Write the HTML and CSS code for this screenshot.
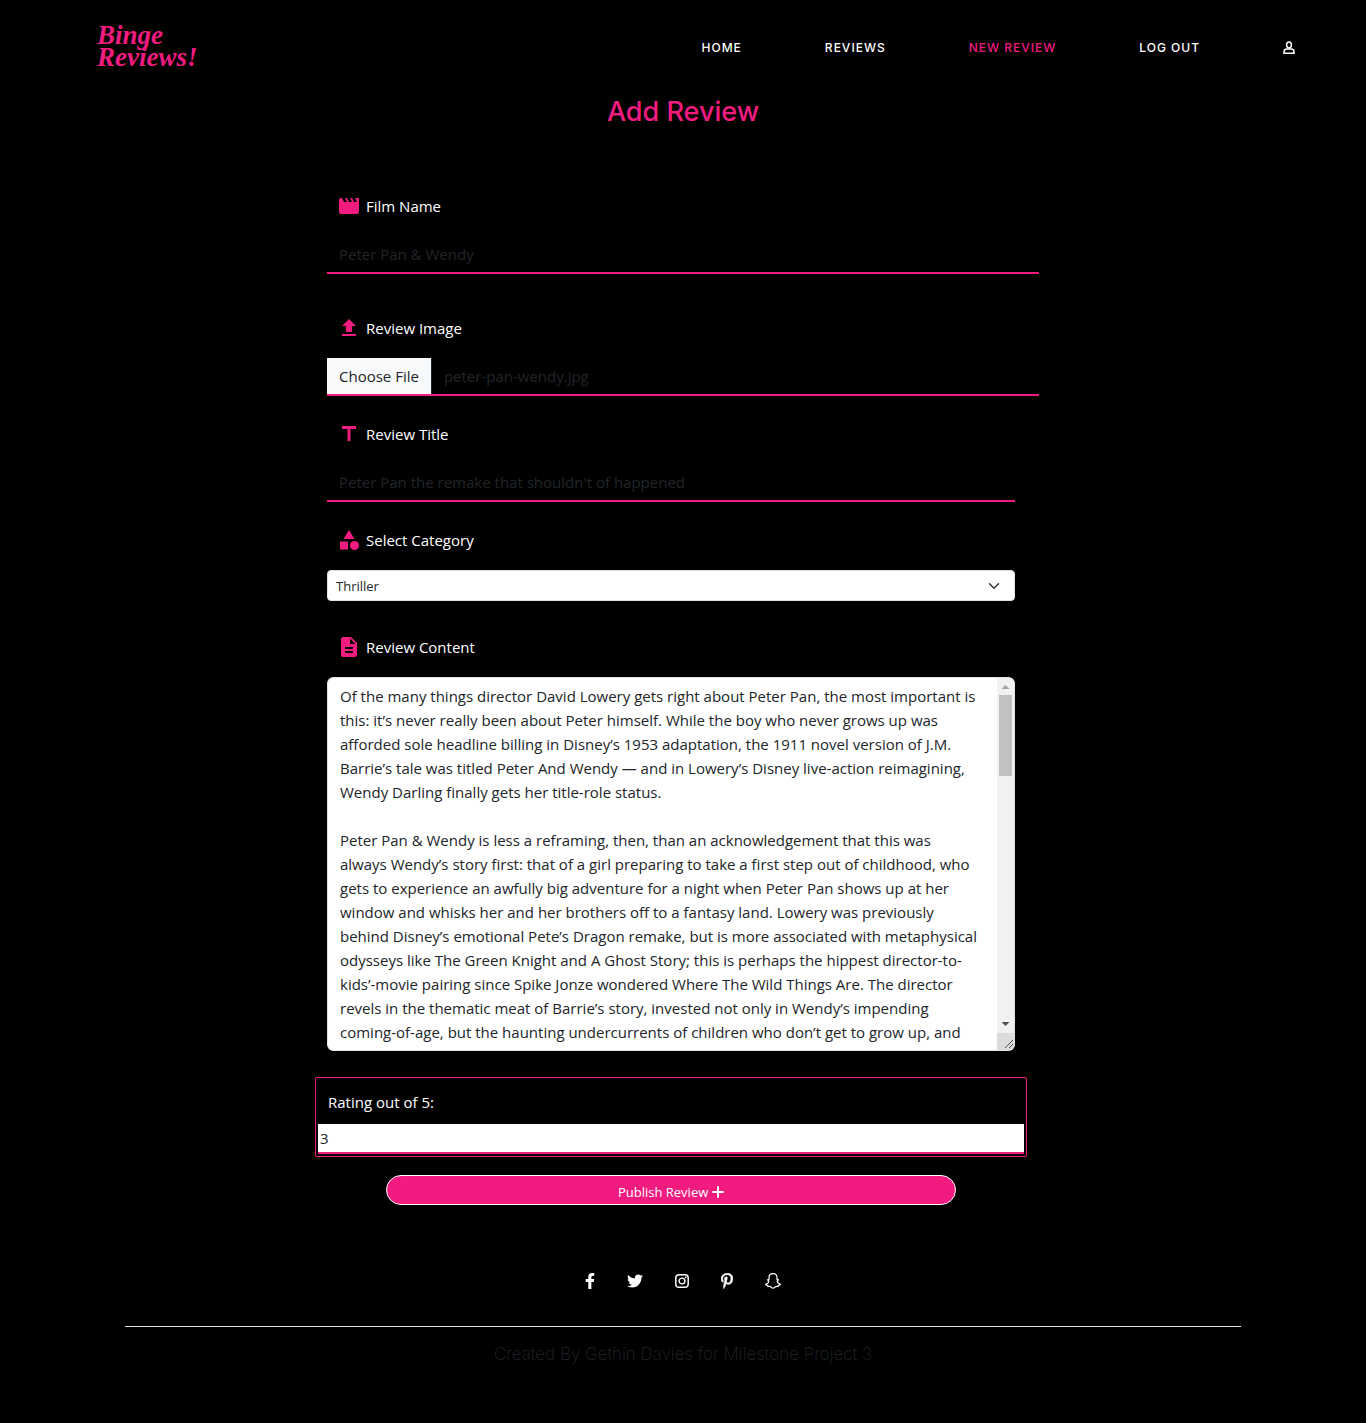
FILE: index.html
```html
<!DOCTYPE html>
<html lang="en">
<head>
<meta charset="utf-8">
<meta name="viewport" content="width=device-width, initial-scale=1">
<title>Binge Reviews! - Add Review</title>
<link rel="stylesheet" href="styles.css">
</head>
<body>
<header class="site-header">
  <a class="logo" href="#"><span>Binge</span><span>Reviews!</span></a>
  <nav class="nav" aria-label="Main">
    <a href="#">HOME</a>
    <a href="#">REVIEWS</a>
    <a class="active" href="#">NEW REVIEW</a>
    <a href="#">LOG OUT</a>
    <a class="profile" href="#" aria-label="Profile">
      <svg viewBox="0 0 12 14" width="12" height="14" fill="none" stroke="currentColor" stroke-width="1.5"><ellipse cx="6" cy="4" rx="2.4" ry="2.9"/><path d="M1 12.2V11c0-1.800 1.200-3 3-3h4c1.800 0 3 1.200 3 3v1.200z"/></svg>
    </a>
  </nav>
</header>
<main>
  <h1 class="title">Add Review</h1>
  <form class="form">
    <div class="field field-wide">
      <label for="film"><svg viewBox="0 0 24 24"><path d="m18 4 2 4h-3l-2-4h-2l2 4h-3l-2-4H8l2 4H7L5 4H4c-1.100 0-1.990.9-1.990 2L2 18c0 1.100.9 2 2 2h16c1.100 0 2-.9 2-2V4h-4z"/></svg>Film Name</label>
      <input class="line-input" id="film" type="text" value="Peter Pan &amp; Wendy">
    </div>
    <div class="field field-image">
      <label for="image"><svg viewBox="0 0 24 24"><path d="M9 16h6v-6h4l-7-7-7 7h4zm-4 2h14v2H5z"/></svg>Review Image</label>
      <input class="line-input file-input" id="image" type="file">
    </div>
    <div class="field">
      <label for="title"><svg viewBox="0 0 24 24"><path d="M5 4v3h5.500v12h3V7H19V4z"/></svg>Review Title</label>
      <input class="line-input" id="title" type="text" value="Peter Pan the remake that shouldn't of happened">
    </div>
    <div class="field">
      <label for="category"><svg viewBox="0 0 24 24"><path d="m12 2-5.500 9h11z"/><circle cx="17.500" cy="17.500" r="4.500"/><path d="M3 13.500h8v8H3z"/></svg>Select Category</label>
      <select class="select" id="category"><option>Thriller</option><option>Comedy</option><option>Horror</option><option>Family</option></select>
    </div>
    <div class="field field-content">
      <label for="content"><svg viewBox="0 0 24 24"><path d="M14 2H6c-1.100 0-1.990.9-1.990 2L4 20c0 1.100.89 2 1.990 2H18c1.100 0 2-.9 2-2V8l-6-6zm2 16H8v-2h8v2zm0-4H8v-2h8v2zm-3-5V3.500L18.500 9H13z"/></svg>Review Content</label>
      <div class="editor">
        <textarea class="textarea" id="content">Of the many things director David Lowery gets right about Peter Pan, the most important is this: it’s never really been about Peter himself. While the boy who never grows up was afforded sole headline billing in Disney’s 1953 adaptation, the 1911 novel version of J.M. Barrie’s tale was titled Peter And Wendy — and in Lowery’s Disney live-action reimagining, Wendy Darling finally gets her title-role status.

Peter Pan &amp; Wendy is less a reframing, then, than an acknowledgement that this was always Wendy’s story first: that of a girl preparing to take a first step out of childhood, who gets to experience an awfully big adventure for a night when Peter Pan shows up at her window and whisks her and her brothers off to a fantasy land. Lowery was previously behind Disney’s emotional Pete’s Dragon remake, but is more associated with metaphysical odysseys like The Green Knight and A Ghost Story; this is perhaps the hippest director-to-kids’-movie pairing since Spike Jonze wondered Where The Wild Things Are. The director revels in the thematic meat of Barrie’s story, invested not only in Wendy’s impending coming-of-age, but the haunting undercurrents of children who don’t get to grow up, and</textarea>
        <div class="scrollbar" aria-hidden="true">
          <span class="arrow arrow-up"></span>
          <span class="thumb"></span>
          <span class="arrow arrow-down"></span>
          <svg class="grip" viewBox="0 0 17 17" width="17" height="17"><path d="m8 15 8-8m-4 8 4-4" stroke="#505050"/></svg>
        </div>
      </div>
    </div>
    <div class="rating">
      <label for="rating">Rating out of 5:</label>
      <input id="rating" type="text" inputmode="numeric" value="3">
    </div>
    <button class="publish" type="submit">Publish Review <svg viewBox="0 0 12 12" width="12" height="12"><path d="M6 1v10M1 6h10" stroke="currentColor" stroke-width="2" stroke-linecap="round"/></svg></button>
  </form>
</main>
<footer class="footer">
  <div class="social">
    <a href="#" aria-label="Facebook"><svg width="10" height="16" viewBox="0 0 320 512"><path d="M279.140 288l14.220-92.660h-88.910v-60.130c0-25.350 12.420-50.060 52.240-50.060h40.420V6.260S260.430 0 225.360 0c-73.220 0-121.080 44.380-121.080 124.720v70.620H22.890V288h81.390v224h100.170V288z"/></svg></a>
    <a href="#" aria-label="Twitter"><svg width="16" height="16" viewBox="0 0 512 512"><path d="M459.370 151.716c.325 4.548.325 9.097.325 13.645 0 138.720-105.583 298.558-298.558 298.558-59.452 0-114.680-17.219-161.137-47.106 8.447.974 16.568 1.299 25.340 1.299 49.055 0 94.213-16.568 130.274-44.832-46.132-.975-84.792-31.188-98.112-72.772 6.498.974 12.995 1.624 19.818 1.624 9.421 0 18.843-1.300 27.614-3.573-48.081-9.747-84.143-51.980-84.143-102.985v-1.299c13.969 7.797 30.214 12.670 47.431 13.319-28.264-18.843-46.781-51.005-46.781-87.391 0-19.492 5.197-37.360 14.294-52.954 51.655 63.675 129.300 105.258 216.365 109.807-1.624-7.797-2.599-15.918-2.599-24.040 0-57.828 46.782-104.934 104.934-104.934 30.213 0 57.502 12.670 76.670 33.137 23.715-4.548 46.456-13.320 66.599-25.340-7.798 24.366-24.366 44.833-46.132 57.827 21.117-2.273 41.584-8.122 60.426-16.243-14.292 20.791-32.161 39.308-52.628 54.253z"/></svg></a>
    <a href="#" aria-label="Instagram"><svg width="14" height="14" viewBox="0 0 14 14"><rect x=".8" y=".8" width="12.400" height="12.400" rx="3.300" fill="none" stroke="currentColor" stroke-width="1.500"/><circle cx="7" cy="7" r="2.900" fill="none" stroke="currentColor" stroke-width="1.400"/><circle cx="10.700" cy="3.300" r=".9"/></svg></a>
    <a href="#" aria-label="Pinterest"><svg width="12" height="16" viewBox="0 0 384 512"><path stroke="currentColor" stroke-width="14" d="M204 6.500C101.400 6.500 0 74.900 0 185.600 0 256 39.600 296 63.600 296c9.900 0 15.600-27.600 15.600-35.400 0-9.300-23.700-29.100-23.700-67.800 0-80.400 61.200-137.400 140.400-137.400 68.100 0 118.500 38.700 118.500 109.800 0 53.100-21.300 152.700-90.300 152.700-24.900 0-46.200-18-46.200-43.800 0-37.800 26.400-74.400 26.400-113.400 0-66.200-93.900-54.200-93.900 25.800 0 16.800 2.100 35.400 9.600 50.700-13.800 59.400-42 147.900-42 209.100 0 18.900 2.700 37.500 4.500 56.400 3.400 3.800 1.700 3.400 6.900 1.500 50.400-69 48.600-82.500 71.400-172.800 12.300 23.400 44.100 36 69.300 36 106.200 0 153.900-103.500 153.900-196.800C384 71.300 298.200 6.500 204 6.500z"/></svg></a>
    <a href="#" aria-label="Snapchat"><svg width="16" height="16" viewBox="0 0 16 16"><path d="M8 .7C5.600.7 4 2.500 4 4.700v1.800c-.3.200-.8.200-1.200.1-.2.700.4 1.200 1 1.500C3.600 9.700 2.200 10.900.6 11.300c.2.800 1.100 1 2.100 1.200l.3 1c1.900-.4 2.600.1 3.300.8.500.5 1 .9 1.700.9s1.200-.4 1.700-.9c.7-.7 1.400-1.200 3.300-.8l.3-1c1-.2 1.900-.4 2.100-1.200-1.600-.4-3-1.600-3.200-3.200.6-.3 1.200-.8 1-1.500-.4.1-.9.100-1.200-.1V4.700C12 2.500 10.400.7 8 .7z" fill="none" stroke="currentColor" stroke-width="1.200"/></svg></a>
  </div>
  <p class="credit">Created By Gethin Davies for Milestone Project 3</p>
</footer>
<script src="script.js"></script>
</body>
</html>
```
FILE: styles.css
```css
:root {
  --pink: #f21c80;
  --ink: #212529;
  --body-font: "Open Sans", "Noto Sans", sans-serif;
}

*,
*::before,
*::after {
  box-sizing: border-box;
}

body {
  margin: 0;
  background: #000;
  color: var(--ink);
  font-family: var(--body-font);
  font-size: 15px;
  line-height: 24px;
}

a {
  color: #fff;
  text-decoration: none;
}

.site-header {
  display: flex;
  align-items: center;
  justify-content: space-between;
  padding: 24px 71px 28px 97px;
}

.logo {
  display: flex;
  flex-direction: column;
  color: var(--pink);
  font: italic bold 27px/22px "Liberation Serif", serif;
}

.nav {
  display: flex;
  align-items: center;
  gap: 83px;
  padding-top: 4px;
  font: 500 12px/20px Inter, sans-serif;
  letter-spacing: 1px;
}

.nav .active {
  color: var(--pink);
}

.profile svg {
  display: block;
}

.title {
  margin: 0;
  color: var(--pink);
  text-align: center;
  font: 500 27px/32px Inter, sans-serif;
}

.form {
  max-width: 712px;
  margin: 66px auto 0;
}

.field {
  display: flex;
  flex-direction: column;
  gap: 18px;
  margin: 0 24px 26px 0;
}

.field-wide {
  margin: 0 0 42px;
}

.field-image {
  margin-right: 0;
}

.field label {
  display: flex;
  gap: 5px;
  padding-left: 10px;
  color: #fff;
}

.field label svg {
  width: 24px;
  height: 24px;
  fill: var(--pink);
}

.line-input {
  width: 100%;
  height: 38px;
  padding: 6px 12px;
  border: 0;
  border-bottom: 2px solid var(--pink);
  background: transparent;
  color: var(--ink);
  font: inherit;
}

.file-input {
  padding: 0;
}

.file-input::file-selector-button {
  height: 36px;
  margin: 0 12px 0 0;
  padding: 6px 12px;
  border: 0;
  border-right: 1px solid var(--ink);
  background: #f8f9fa;
  color: var(--ink);
  font: inherit;
}

.select {
  height: 31px;
  padding: 0 8px;
  border: 1px solid #dee2e6;
  border-radius: 4px;
  appearance: none;
  background: #fff url("data:image/svg+xml,%3Csvg xmlns='http://www.w3.org/2000/svg' viewBox='0 0 16 16'%3E%3Cpath fill='none' stroke='%23343a40' stroke-linecap='round' stroke-linejoin='round' stroke-width='2' d='m2 5 6 6 6-6'/%3E%3C/svg%3E") no-repeat right 14px center / 12px 12px;
  color: var(--ink);
  font: 13px/20px var(--body-font);
}

.field-content {
  margin-top: 34px;
}

.editor {
  position: relative;
  display: flex;
  border-radius: 6px;
  overflow: hidden;
}

.textarea {
  flex: 1;
  height: 374px;
  padding: 6px 37px 6px 12px;
  border: 1px solid #dee2e6;
  border-radius: 6px;
  background: #fff;
  color: var(--ink);
  font: inherit;
  resize: vertical;
}

/* Scroll bar laid over the right edge of the text area */
.scrollbar {
  position: absolute;
  top: 1px;
  right: 1px;
  bottom: 1px;
  display: flex;
  flex-direction: column;
  align-items: center;
  width: 17px;
  border-radius: 0 5px 5px 0;
  background: #f1f1f1;
  overflow: hidden;
  pointer-events: none;
}

.arrow {
  width: 8px;
  height: 4px;
}

.arrow-up {
  margin: 7px 0 6px;
  background: #a3a3a3;
  clip-path: polygon(0 100%, 50% 0, 100% 100%);
}

.arrow-down {
  margin: auto 0 7px;
  background: #505050;
  clip-path: polygon(0 0, 100% 0, 50% 100%);
}

.thumb {
  width: 13px;
  height: 81px;
  background: #c1c1c1;
}

.grip {
  flex: none;
  background: #dcdcdc;
}

.rating {
  display: flex;
  flex-direction: column;
  margin: 0 12px 18px -12px;
  padding: 12px 2px 2px;
  border: 1px solid var(--pink);
  border-radius: 2px;
}

.rating label {
  padding: 0 10px 10px;
  color: #fff;
}

.rating input {
  height: 30px;
  padding: 0 2px;
  border: 0;
  border-bottom: 2px solid var(--pink);
  background: #fff;
  color: var(--ink);
  font: inherit;
}

.publish {
  display: block;
  width: 80%;
  height: 30px;
  margin-left: 59px;
  padding: 3px 0 0;
  border: 1px solid #fff;
  border-radius: 15px;
  background: var(--pink);
  color: #fff;
  font: 13px/20px var(--body-font);
}

.publish svg {
  vertical-align: -1px;
}

.footer {
  margin: 66px 125px 0;
  padding-bottom: 56px;
  text-align: center;
}

.social {
  display: flex;
  align-items: center;
  justify-content: center;
  gap: 32px;
  padding-bottom: 35px;
  border-bottom: 1px solid #dee2e6;
}

.social a {
  display: flex;
  align-items: center;
  height: 20px;
}

.social svg {
  fill: currentColor;
}

.credit {
  margin: 15px 0 0;
  font: 200 17px/24px Inter, sans-serif;
}
```
FILE: script.js
```js
const picked = new DataTransfer();
picked.items.add(new File([""], "peter-pan-wendy.jpg", { type: "image/jpeg" }));
document.getElementById("image").files = picked.files;
```
